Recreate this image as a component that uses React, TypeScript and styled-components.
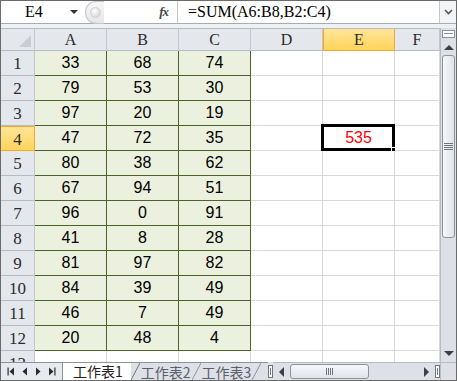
import React from "react";
import styled, { createGlobalStyle, css } from "styled-components";

const GlobalStyle = createGlobalStyle`
  html, body { margin: 0; padding: 0; background: #fff; }
  body { font-family: "Liberation Sans", Arial, sans-serif; }
`;

const columns = ["A", "B", "C", "D", "E", "F"];
const data: number[][] = [
  [33, 68, 74],
  [79, 53, 30],
  [97, 20, 19],
  [47, 72, 35],
  [80, 38, 62],
  [67, 94, 51],
  [96, 0, 91],
  [41, 8, 28],
  [81, 97, 82],
  [84, 39, 49],
  [46, 7, 49],
  [20, 48, 4],
];
const SEL_ROW = 4;
const SEL_COL = "E";

const Window = styled.div`
  width: 457px;
  height: 381px;
  box-sizing: border-box;
  border: 1px solid #6b6b6b;
  display: flex;
  flex-direction: column;
  overflow: hidden;
  background: #fff;
`;

/* ---------- formula bar ---------- */
const FormulaBar = styled.div`
  height: 23px;
  box-sizing: border-box;
  border-bottom: 1px solid #a5acb5;
  display: flex;
  align-items: stretch;
  flex-shrink: 0;
`;

const NameBox = styled.div`
  width: 84px;
  display: flex;
  align-items: center;
  justify-content: space-between;
  padding: 0 7px 0 24px;
  box-sizing: border-box;
  font-family: "Liberation Serif", serif;
  font-size: 16px;
  color: #000;
`;

const Arrow = styled.span`
  width: 0;
  height: 0;
  border-left: 4px solid transparent;
  border-right: 4px solid transparent;
  border-top: 4px solid #333;
`;

const FxArea = styled.div`
  width: 93px;
  display: flex;
  align-items: center;
  justify-content: space-between;
  box-sizing: border-box;
  border-right: 1px solid #c4c8ce;
  padding-right: 9px;
`;

const Grip = styled.div`
  width: 18px;
  height: 21px;
  border: 1px solid #c4c8ce;
  border-right: none;
  border-radius: 11px 0 0 11px;
  background: linear-gradient(#f7f7f7, #e6e6e6);
  display: flex;
  align-items: center;
  justify-content: center;
  margin-top: 1px;
  &::after {
    content: "";
    width: 9px;
    height: 9px;
    border-radius: 50%;
    background: radial-gradient(circle at 40% 35%, #fff, #c9cbcf);
    border: 1px solid #d0d2d6;
  }
`;

const Fx = styled.span`
  font-family: "Liberation Serif", serif;
  font-style: italic;
  font-weight: bold;
  font-size: 13px;
  color: #444;
  letter-spacing: -1px;
`;

const FormulaText = styled.div`
  flex: 1;
  display: flex;
  align-items: center;
  padding-left: 10px;
  font-family: "Liberation Serif", serif;
  font-size: 16px;
  color: #000;
`;

const ExpandBtn = styled.div`
  width: 16px;
  border-left: 1px solid #c4c8ce;
  display: flex;
  align-items: center;
  justify-content: center;
  background: #f3f4f6;
`;

const Strip = styled.div`
  height: 4px;
  background: #eef0f3;
  flex-shrink: 0;
`;

/* ---------- sheet ---------- */
const Body = styled.div`
  display: flex;
  height: 334px;
  flex-shrink: 0;
`;

const Grid = styled.div`
  flex: 1;
  display: grid;
  grid-template-columns: 34px repeat(5, 72px) 45px;
  grid-template-rows: 22px repeat(13, 25px);
  overflow: hidden;
  border-top: 1px solid #b7bcc4;
`;

const headerBase = css`
  box-sizing: border-box;
  display: flex;
  align-items: center;
  justify-content: center;
  font-family: "Liberation Serif", serif;
  font-size: 16px;
  color: #2b2b2b;
  border-right: 1px solid #c2c7ce;
  border-bottom: 1px solid #b7bcc4;
`;

const ColHeader = styled.div<{ $selected?: boolean }>`
  ${headerBase}
  background: ${({ $selected }) =>
    $selected ? "linear-gradient(#ffe598, #ffd45c)" : "#e4e7ec"};
  ${({ $selected }) =>
    $selected &&
    css`
      border: 1px solid #f0a830;
      border-top: none;
    `}
`;

const Corner = styled.div`
  ${headerBase}
  background: #e4e7ec;
  position: relative;
  &::after {
    content: "";
    position: absolute;
    right: 3px;
    bottom: 3px;
    width: 0;
    height: 0;
    border-left: 12px solid transparent;
    border-bottom: 12px solid #c9cdd3;
  }
`;

const RowHeader = styled.div<{ $selected?: boolean }>`
  ${headerBase}
  font-size: 17px;
  padding-top: 2px;
  background: ${({ $selected }) =>
    $selected ? "linear-gradient(#ffe598, #ffd45c)" : "#e4e7ec"};
  ${({ $selected }) =>
    $selected &&
    css`
      border: 1px solid #f0a830;
      border-left: none;
    `}
`;

const Cell = styled.div<{ $filled?: boolean; $active?: boolean }>`
  box-sizing: border-box;
  display: flex;
  align-items: center;
  justify-content: center;
  font-size: 16px;
  color: #000;
  position: relative;
  border-right: 1px solid ${({ $filled }) => ($filled ? "#4f6228" : "#d9d9d9")};
  border-bottom: 1px solid ${({ $filled }) => ($filled ? "#4f6228" : "#d9d9d9")};
  background: ${({ $filled }) => ($filled ? "#ebf1de" : "#fff")};
  ${({ $active }) =>
    $active &&
    css`
      color: #ff0000;
      &::before {
        content: "";
        position: absolute;
        left: -2px;
        top: -2px;
        right: -1px;
        bottom: -1px;
        border: 3px solid #000;
      }
      &::after {
        content: "";
        position: absolute;
        right: -4px;
        bottom: -4px;
        width: 5px;
        height: 5px;
        background: #000;
        border: 1px solid #fff;
      }
    `}
`;

/* ---------- vertical scrollbar ---------- */
const VScroll = styled.div`
  width: 16px;
  background: #dde1e7;
  border-left: 1px solid #b7bcc4;
  box-sizing: border-box;
  display: flex;
  flex-direction: column;
  align-items: center;
`;

const Splitter = styled.div`
  width: 11px;
  height: 6px;
  margin-top: 2px;
  background: #fff;
  border: 1px solid #8d939b;
  &::after {
    content: "";
    display: block;
    margin: 2px 1px 0;
    height: 1px;
    background: #8d939b;
  }
`;

const ArrowBtn = styled.div<{ $dir: "up" | "down" | "left" | "right" }>`
  width: 0;
  height: 0;
  flex-shrink: 0;
  ${({ $dir }) =>
    $dir === "up"
      ? css`
          border-left: 5px solid transparent;
          border-right: 5px solid transparent;
          border-bottom: 5px solid #3c3f44;
        `
      : $dir === "down"
      ? css`
          border-left: 5px solid transparent;
          border-right: 5px solid transparent;
          border-top: 5px solid #3c3f44;
        `
      : $dir === "left"
      ? css`
          border-top: 5px solid transparent;
          border-bottom: 5px solid transparent;
          border-right: 5px solid #3c3f44;
        `
      : css`
          border-top: 5px solid transparent;
          border-bottom: 5px solid transparent;
          border-left: 5px solid #3c3f44;
        `}
`;

const VThumb = styled.div`
  width: 13px;
  height: 183px;
  margin-top: 5px;
  box-sizing: border-box;
  border: 1px solid #8d939b;
  border-radius: 3px;
  background: linear-gradient(90deg, #f6f7f9, #dfe3e9);
  display: flex;
  align-items: center;
  justify-content: center;
`;

const Spacer = styled.div<{ $size?: number }>`
  flex: ${({ $size }) => ($size ? `0 0 ${$size}px` : "1")};
`;

/* ---------- tab bar ---------- */
const TabBar = styled.div`
  height: 18px;
  flex-shrink: 0;
  background: #dde1e7;
  display: flex;
  align-items: stretch;
`;

const NavBox = styled.div`
  width: 62px;
  flex-shrink: 0;
  box-sizing: border-box;
  border: 1px solid #8d939b;
  border-left: none;
  border-bottom: none;
  background: #e6e9ee;
  display: flex;
  align-items: center;
  justify-content: space-around;
  padding: 0 3px;
`;

const Tabs = styled.div`
  display: flex;
  align-items: stretch;
  flex-shrink: 0;
  width: 205px;
  overflow: hidden;
  border-top: 1px solid #8d939b;
`;

const Tab = styled.div<{ $active?: boolean }>`
  display: flex;
  align-items: center;
  flex-shrink: 0;
  white-space: nowrap;
  font-family: "Noto Sans CJK TC", "Noto Sans CJK SC", sans-serif;
  font-size: 14px;
  line-height: 1;
  color: ${({ $active }) => ($active ? "#222" : "#5b6068")};
  background: ${({ $active }) => ($active ? "#fff" : "transparent")};
  padding: ${({ $active }) => ($active ? "0 8px 0 10px" : "0 1px")};
  margin-top: ${({ $active }) => ($active ? "-1px" : "0")};
`;

const Slant = styled.svg`
  flex-shrink: 0;
`;

const SmallSplit = styled.div`
  width: 5px;
  height: 13px;
  flex-shrink: 0;
  background: #fff;
  border: 1px solid #6f757d;
  box-sizing: border-box;
  align-self: center;
  position: relative;
  &::after {
    content: "";
    position: absolute;
    left: 1px;
    top: 2px;
    bottom: 2px;
    width: 1px;
    background: #6f757d;
  }
`;

const HScroll = styled.div`
  flex: 1;
  display: flex;
  align-items: center;
  padding: 0 0 0 6px;
  gap: 6px;
  border-top: 1px solid #b7bcc4;
`;

const HThumb = styled.div`
  width: 79px;
  height: 15px;
  box-sizing: border-box;
  border: 1px solid #8d939b;
  border-radius: 3px;
  background: linear-gradient(#f6f7f9, #dfe3e9);
  display: flex;
  align-items: center;
  justify-content: center;
`;

const ScrollCorner = styled.div`
  width: 16px;
  flex-shrink: 0;
  background: #dde1e7;
  border-left: 1px solid #b7bcc4;
  border-top: 1px solid #b7bcc4;
  box-sizing: border-box;
`;

const NavIcon = ({ kind }: { kind: "first" | "prev" | "next" | "last" }) => (
  <svg width="8" height="9" viewBox="0 0 8 9">
    {kind === "first" && (
      <>
        <rect x="0.5" y="0.5" width="1.2" height="8" fill="#2b2b2b" />
        <path d="M7 0.5 L2.5 4.5 L7 8.5 Z" fill="#2b2b2b" />
      </>
    )}
    {kind === "prev" && <path d="M6 0.5 L1.5 4.5 L6 8.5 Z" fill="#2b2b2b" />}
    {kind === "next" && <path d="M2 0.5 L6.5 4.5 L2 8.5 Z" fill="#2b2b2b" />}
    {kind === "last" && (
      <>
        <path d="M1 0.5 L5.5 4.5 L1 8.5 Z" fill="#2b2b2b" />
        <rect x="6.3" y="0.5" width="1.2" height="8" fill="#2b2b2b" />
      </>
    )}
  </svg>
);

const GripLines = ({ vertical }: { vertical?: boolean }) =>
  vertical ? (
    <svg width="7" height="7" viewBox="0 0 7 7">
      {[0.5, 2.5, 4.5, 6.5].map((x) => (
        <line key={x} x1={x} y1="0" x2={x} y2="7" stroke="#6f757d" />
      ))}
    </svg>
  ) : (
    <svg width="9" height="7" viewBox="0 0 9 7">
      {[0.5, 2.5, 4.5, 6.5].map((y) => (
        <line key={y} x1="0" y1={y} x2="9" y2={y} stroke="#6f757d" />
      ))}
    </svg>
  );

const TabEdge = ({ light }: { light?: boolean }) => (
  <Slant width="9" height="17" viewBox="0 0 9 17">
    <path d="M0 17 L9 0" stroke={light ? "#8d939b" : "#6f757d"} fill="none" />
  </Slant>
);

export default function App(): JSX.Element {
  return (
    <>
      <GlobalStyle />
      <Window>
        <FormulaBar>
          <NameBox>
            <span>E4</span>
            <Arrow />
          </NameBox>
          <FxArea>
            <Grip />
            <Fx>fx</Fx>
          </FxArea>
          <FormulaText>=SUM(A6:B8,B2:C4)</FormulaText>
          <ExpandBtn>
            <svg width="9" height="6" viewBox="0 0 9 6">
              <path d="M1 1 L4.5 4.5 L8 1" stroke="#555" strokeWidth="1.6" fill="none" />
            </svg>
          </ExpandBtn>
        </FormulaBar>
        <Strip />
        <Body>
          <Grid>
            <Corner />
            {columns.map((c) => (
              <ColHeader key={c} $selected={c === SEL_COL}>
                {c}
              </ColHeader>
            ))}
            {Array.from({ length: 13 }, (_, i) => {
              const row = i + 1;
              return (
                <React.Fragment key={row}>
                  <RowHeader $selected={row === SEL_ROW}>{row}</RowHeader>
                  {columns.map((c, ci) => {
                    const filled = ci < 3 && row <= 12;
                    const active = row === SEL_ROW && c === SEL_COL;
                    return (
                      <Cell key={c} $filled={filled} $active={active}>
                        {filled ? data[i][ci] : active ? 535 : null}
                      </Cell>
                    );
                  })}
                </React.Fragment>
              );
            })}
          </Grid>
          <VScroll>
            <Splitter />
            <Spacer $size={7} />
            <ArrowBtn $dir="up" />
            <VThumb>
              <GripLines />
            </VThumb>
            <Spacer />
            <ArrowBtn $dir="down" />
            <Spacer $size={6} />
          </VScroll>
        </Body>
        <TabBar>
          <NavBox>
            <NavIcon kind="first" />
            <NavIcon kind="prev" />
            <NavIcon kind="next" />
            <NavIcon kind="last" />
          </NavBox>
          <Tabs>
            <Tab $active>工作表1</Tab>
            <TabEdge />
            <Tab>工作表2</Tab>
            <TabEdge light />
            <Tab>工作表3</Tab>
            <TabEdge light />
          </Tabs>
          <SmallSplit />
          <HScroll>
            <ArrowBtn $dir="left" />
            <HThumb>
              <GripLines vertical />
            </HThumb>
            <Spacer />
            <ArrowBtn $dir="right" />
            <SmallSplit />
          </HScroll>
          <ScrollCorner />
        </TabBar>
      </Window>
    </>
  );
}
